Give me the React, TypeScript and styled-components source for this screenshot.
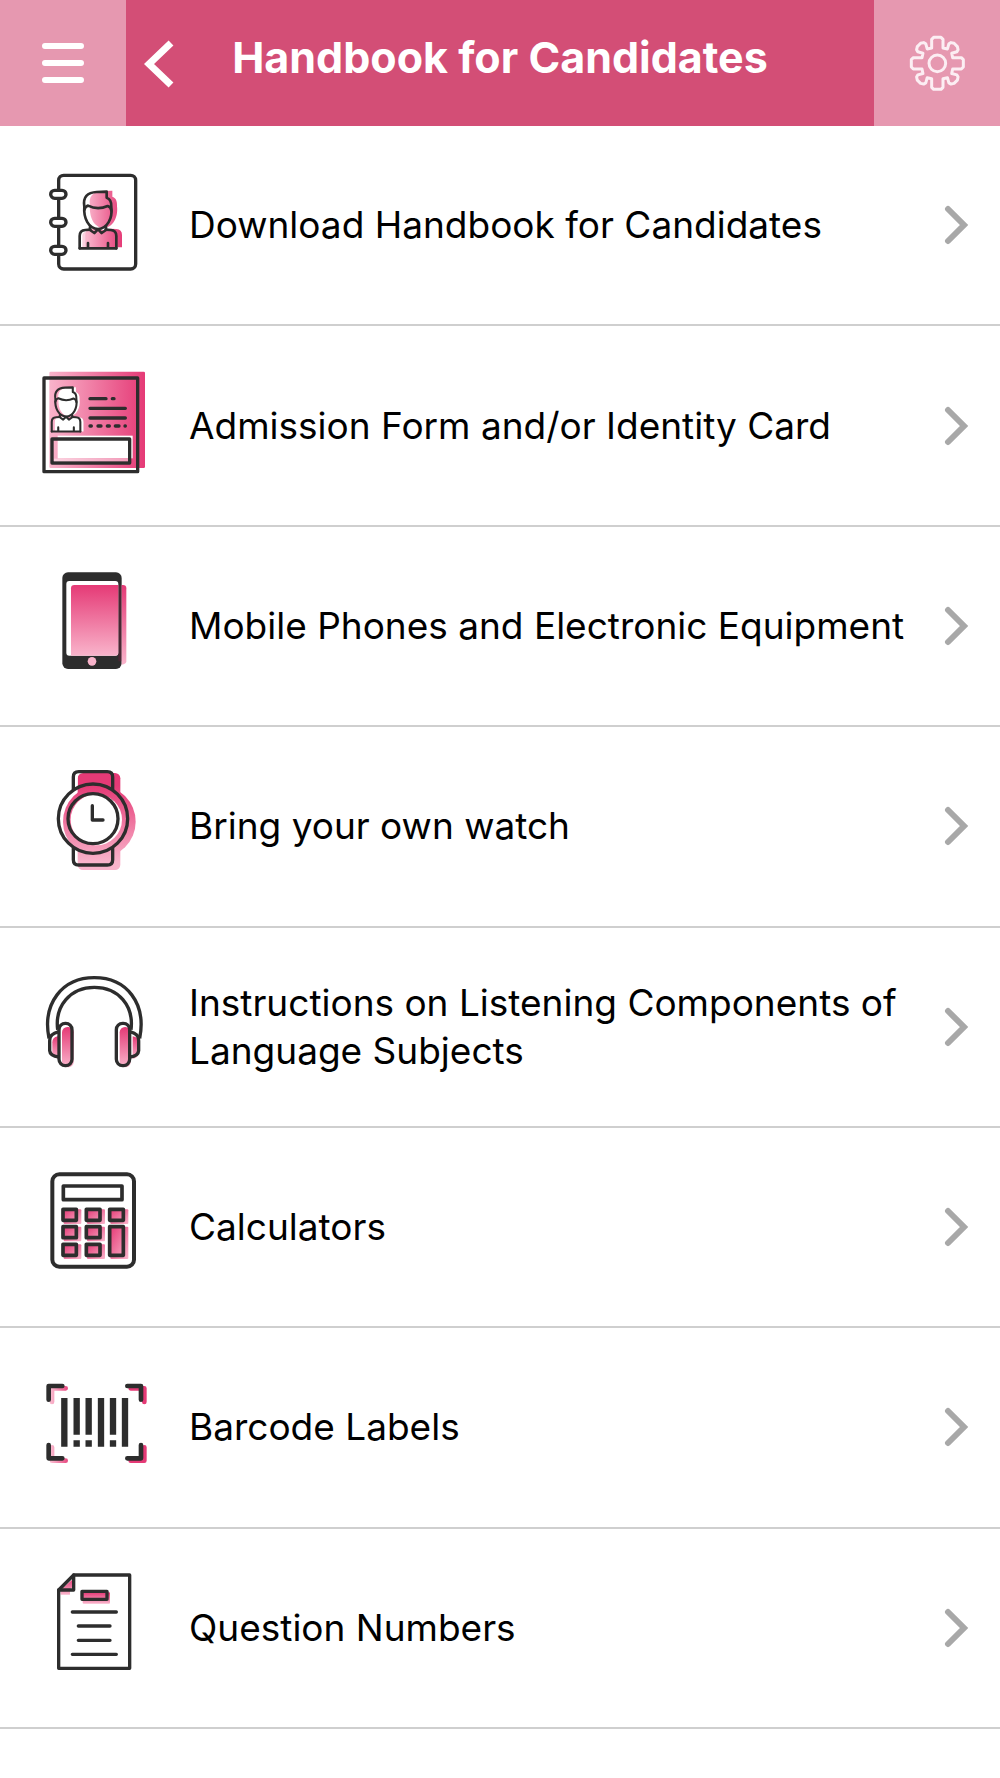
import React from "react";
import styled, { createGlobalStyle } from "styled-components";

const INK = "#2d2d2d";
const PINK = "#e53a76";
const PALE = "#f9b4cb";

const GlobalStyle = createGlobalStyle`
  * { box-sizing: border-box; }
  body {
    margin: 0;
    background: #fff;
    color: #000;
    font-family: Inter, "Liberation Sans", sans-serif;
  }
`;

const Page = styled.div`
  display: flex;
  flex-direction: column;
  min-height: 100vh;
  padding-bottom: 49px;
`;

const Header = styled.header`
  display: grid;
  grid-template-columns: 126px 1fr 126px;
  height: 126px;
  background: #d34e76;
`;

const CornerButton = styled.button`
  display: flex;
  align-items: center;
  justify-content: center;
  padding: 0;
  border: 0;
  background: #e698b0;
  cursor: pointer;
`;

const TitleBar = styled.div`
  display: grid;
  grid-template-columns: 66px 1fr 66px;
  align-items: stretch;
`;

const BackButton = styled.button`
  display: flex;
  align-items: center;
  justify-content: center;
  padding: 0;
  border: 0;
  background: transparent;
  cursor: pointer;
`;

const Title = styled.h1`
  display: flex;
  align-items: center;
  justify-content: center;
  margin: 0;
  padding-bottom: 12px;
  color: #fff;
  font-size: 43px;
  font-weight: 700;
  line-height: 48px;
  white-space: nowrap;
`;

const List = styled.ul`
  flex: 1;
  display: grid;
  grid-auto-rows: minmax(200px, 1fr);
  margin: 0;
  padding: 0;
  list-style: none;
`;

const Item = styled.li`
  display: grid;
  border-bottom: 2px solid #cfcfcf;
`;

const RowLink = styled.a`
  display: grid;
  grid-template-columns: 130px 1fr 26px;
  align-items: center;
  padding: 0 30px;
  color: inherit;
  text-decoration: none;
`;

const Label = styled.span`
  padding: 0 29px;
  font-size: 37px;
  line-height: 48px;
`;

const Icon = styled.svg`
  display: block;
  width: 130px;
  height: 130px;
`;

function Gradient({ id, vertical = false, from = PALE, to = PINK }: { id: string; vertical?: boolean; from?: string; to?: string }) {
  return (
    <linearGradient id={id} x1="0" y1="0" x2={vertical ? "0" : "1"} y2={vertical ? "1" : "0"}>
      <stop offset="0" stopColor={from} />
      <stop offset="1" stopColor={to} />
    </linearGradient>
  );
}

const HEAD = "M163 140 C158 112 172 97 200 96 L230 95 V113 C240 116 245 125 244 142 C248 175 232 206 204 207 C176 206 160 175 163 140 Z";
const TORSO = "M149 265 V228 Q149 211 166 210 L182 209 L204 214 L226 209 L242 210 Q259 211 259 228 V265 Z";

function Person() {
  return (
    <g fill="none" stroke={INK} strokeWidth="8" strokeLinejoin="round" strokeLinecap="round">
      <path d={HEAD} />
      <path d="M163 150 Q166 139 174 137 Q203 151 233 138 Q243 141 244 152" />
      <path d="M180 201 V210 L193 219 L204 208 L215 219 L228 210 V201" />
      <path d="M149 265 V228 Q149 211 166 210 L181 209 M227 209 L242 210 Q259 211 259 228 V265" />
      <path d="M149 265 H259 M174 249 V264 M234 249 V264" />
    </g>
  );
}

function HandbookIcon() {
  return (
    <Icon viewBox="0 0 390 390" aria-hidden="true">
      <defs>
        <linearGradient id="book" gradientUnits="userSpaceOnUse" x1="155" y1="0" x2="260" y2="0">
          <stop offset="0" stopColor={PALE} />
          <stop offset="1" stopColor={PINK} />
        </linearGradient>
      </defs>
      <rect x="86" y="46" width="231" height="281" rx="15" fill="#fff" stroke={INK} strokeWidth="10" />
      <g transform="translate(17 -3)" fill="url(#book)">
        <path d={HEAD} />
        <path d={TORSO} />
      </g>
      <path d="M157 256 V225 Q160 214 174 214 V263 H157 Z" fill={PALE} opacity=".6" />
      <Person />
      {[103, 187, 271].map((y) => (
        <rect key={y} x="62" y={y - 12} width="46" height="24" rx="12" fill="#fff" stroke={INK} strokeWidth="10" />
      ))}
    </Icon>
  );
}

function IdentityIcon() {
  return (
    <Icon viewBox="0 2 390 390" aria-hidden="true">
      <defs><Gradient id="card" /></defs>
      <rect x="58" y="34" width="287" height="289" rx="4" fill="url(#card)" />
      <g transform="translate(-51 7) scale(.78)">
        <g transform="translate(12 0)" fill="#fff"><path d={HEAD} /><path d={TORSO} /></g>
        <Person />
      </g>
      <rect x="83" y="226" width="225" height="68" fill="#fff" />
      <rect x="66" y="236" width="233" height="72" fill="none" stroke={INK} strokeWidth="10" strokeLinejoin="round" />
      <rect x="72" y="295" width="222" height="8" fill="#fff" opacity=".45" />
      <rect x="42" y="53" width="281" height="281" fill="none" stroke={INK} strokeWidth="10" strokeLinejoin="round" />
      <path d="M48 326 H317" stroke="#fff" strokeWidth="5" />
      <path d="M180 115 H228 M247 115 H252 M180 144 H286 M180 173 H286 M180 197 H184 M204 197 H213 M232 197 H238 M256 197 H267 M285 197 H286" stroke={INK} strokeWidth="10" strokeLinecap="round" />
    </Icon>
  );
}

function PhoneIcon() {
  return (
    <Icon viewBox="0 3 390 390" aria-hidden="true">
      <defs><Gradient id="phone" vertical from={PINK} to={PALE} /></defs>
      <rect x="97" y="37" width="178" height="290" rx="17" fill={INK} />
      <rect x="109" y="63" width="156" height="224" rx="9" fill="#fff" />
      <path d="M123 287 V85 Q123 75 133 75 H265 V278 Q265 287 256 287 Z" fill="url(#phone)" />
      <path d="M275 75 H279 Q289 75 289 85 V304 Q289 313 275 314 Z" fill="url(#phone)" />
      <path d="M265 76 H275 V304 H265 Z" fill="#7b1d3e" opacity=".35" />
      <circle cx="186" cy="304" r="13" fill={PALE} />
    </Icon>
  );
}

function WatchIcon() {
  return (
    <Icon viewBox="0 6 390 390" aria-hidden="true">
      <defs>
        <linearGradient id="watch" gradientUnits="userSpaceOnUse" x1="0" y1="80" x2="0" y2="310">
          <stop offset="0" stopColor={PINK} />
          <stop offset="1" stopColor={PALE} />
        </linearGradient>
      </defs>
      <g fill="url(#watch)">
        <rect x="143" y="42" width="128" height="291" rx="16" />
        <circle cx="208" cy="188" r="109" />
      </g>
      <path d="M135 90 V56 Q135 45 143 43 V90 Z" fill="#fff" />
      <circle cx="199" cy="182" r="77" fill="#fff" />
      <g fill="none" stroke={INK} strokeWidth="10" strokeLinecap="round" strokeLinejoin="round">
        <path d="M130 90 V54 Q130 38 146 38 H232 Q248 38 248 54 V90" />
        <path d="M130 268 V302 Q130 318 146 318 H232 Q248 318 248 302 V268" />
        <circle cx="189" cy="179" r="104" />
        <circle cx="189" cy="179" r="75" />
        <path d="M187 140 V183 H219" />
      </g>
    </Icon>
  );
}

function HeadphonesIcon() {
  return (
    <Icon viewBox="0 6 390 390" aria-hidden="true">
      <defs><Gradient id="phones" vertical from={PINK} to={PALE} /></defs>
      <g fill="url(#phones)">
        <path d="M83 229 Q67 232 67 247 V280 Q70 294 90 297 V229 Z" />
        <rect x="96" y="201" width="35" height="121" rx="16" />
        <rect x="269" y="201" width="33" height="121" rx="16" />
        <path d="M308 229 Q326 232 327 247 V280 Q324 294 308 297 Z" />
      </g>
      <g fill="none" stroke={INK} strokeWidth="10" strokeLinejoin="round">
        <path d="M57 235 C36 130 97 53 193 53 C290 53 350 130 329 235" />
        <path d="M83 209 C74 138 121 82 193 82 C266 82 312 138 303 209" />
        <rect x="87" y="190" width="39" height="127" rx="19" />
        <rect x="259" y="190" width="40" height="127" rx="19" />
        <path d="M87 215 C66 220 58 228 59 242 V272 Q60 288 87 291" />
        <path d="M300 215 C320 220 327 228 326 242 V272 Q325 288 300 291" />
      </g>
    </Icon>
  );
}

const KEYS = [
  [99, 151, 40, 33], [169, 151, 41, 33], [239, 151, 41, 33],
  [99, 203, 40, 33], [169, 203, 41, 33], [239, 203, 41, 86],
  [99, 256, 40, 33], [169, 256, 41, 33],
];

function CalculatorIcon() {
  return (
    <Icon viewBox="0 9 390 390" aria-hidden="true">
      <defs>
        <linearGradient id="key" x1="0" y1="0" x2="1" y2="1">
          <stop offset="0" stopColor={PINK} />
          <stop offset="1" stopColor={PALE} />
        </linearGradient>
      </defs>
      <rect x="67" y="46" width="245" height="277" rx="21" fill="#fff" stroke={INK} strokeWidth="12" />
      <rect x="100" y="81" width="176" height="41" fill="none" stroke={INK} strokeWidth="11" strokeLinejoin="round" />
      {KEYS.map(([x, y, w, h]) => (
        <g key={`${x}-${y}`}>
          <rect x={x + 2} y={y} width={w + 13} height={h + 11} rx="3" fill="url(#key)" />
          <rect x={x} y={y} width={w} height={h} fill="none" stroke={INK} strokeWidth="11" strokeLinejoin="round" />
        </g>
      ))}
    </Icon>
  );
}

const CORNERS = "M56 122 V81 H97 M292 81 H333 V122 M56 258 V298 H97 M292 298 H333 V258";

function BarcodeIcon() {
  return (
    <Icon viewBox="0 9 390 390" aria-hidden="true">
      <defs>
        <linearGradient id="scan" gradientUnits="userSpaceOnUse" x1="55" y1="0" x2="110" y2="0">
          <stop offset="0" stopColor={PALE} />
          <stop offset="1" stopColor={PINK} />
        </linearGradient>
      </defs>
      <g fill="none" strokeWidth="14" strokeLinecap="round" strokeLinejoin="round">
        <path d={CORNERS} stroke="url(#scan)" transform="translate(10 7)" />
        <path d={CORNERS} stroke={INK} />
      </g>
      <path d="M103 117 V263 M213 117 V263 M285 117 V263 M140 117 V227 M140 244 V263 M176 117 V227 M176 244 V263 M249 117 V227 M249 244 V263" stroke={INK} strokeWidth="19" />
    </Icon>
  );
}

function PaperIcon() {
  return (
    <Icon viewBox="0 12 390 390" aria-hidden="true">
      <defs><Gradient id="paper" vertical from={PINK} to={PALE} /></defs>
      <path d="M92 107 L120 107 V90 L132 82 V58 L92 92 Z" fill="url(#paper)" />
      <rect x="158" y="100" width="82" height="34" rx="3" fill="url(#paper)" />
      <g fill="none" stroke={INK} strokeWidth="10" strokeLinejoin="round" strokeLinecap="round">
        <path d="M131 48 H299 V328 H86 V93 Z" />
        <path d="M131 48 V93 H86" />
        <rect x="156" y="97" width="75" height="24" />
        <path d="M127 159 H259 M145 201 H240 M145 244 H240 M127 286 H259" />
      </g>
    </Icon>
  );
}

const STRAIGHT_TOOTH = [[-17, -46], [-17, -72], [-11, -78], [11, -78], [17, -72], [17, -46]];
const FLARED_TOOTH = [[-9, -52], [-17, -66], [-15, -73], [-7, -78], [7, -78], [15, -73], [17, -66], [9, -52]];

const gearPath = (() => {
  const points: string[] = [];
  for (let tooth = 0; tooth < 8; tooth++) {
    const a = (tooth * Math.PI) / 4;
    (tooth % 2 ? FLARED_TOOTH : STRAIGHT_TOOTH).forEach(([x, y]) => {
      points.push(`${(x * Math.cos(a) - y * Math.sin(a)).toFixed(1)} ${(x * Math.sin(a) + y * Math.cos(a)).toFixed(1)}`);
    });
  }
  return `M${points.join("L")}Z`;
})();

const ROWS = [
  { label: "Download Handbook for Candidates", Art: HandbookIcon },
  { label: "Admission Form and/or Identity Card", Art: IdentityIcon },
  { label: "Mobile Phones and Electronic Equipment", Art: PhoneIcon },
  { label: "Bring your own watch", Art: WatchIcon },
  { label: "Instructions on Listening Components of Language Subjects", Art: HeadphonesIcon },
  { label: "Calculators", Art: CalculatorIcon },
  { label: "Barcode Labels", Art: BarcodeIcon },
  { label: "Question Numbers", Art: PaperIcon },
];

export default function App() {
  return (
    <Page>
      <GlobalStyle />
      <Header>
        <CornerButton type="button" aria-label="Menu">
          <svg width="44" height="44" viewBox="0 0 44 44" aria-hidden="true">
            <path d="M4 5 H40 M4 22 H40 M4 39 H40" stroke="#fff" strokeWidth="6" strokeLinecap="round" />
          </svg>
        </CornerButton>
        <TitleBar>
          <BackButton type="button" aria-label="Back">
            <svg width="30" height="50" viewBox="0 0 30 50" aria-hidden="true">
              <path d="M27 5 L5 26 L27 47" fill="none" stroke="#fff" strokeWidth="7" />
            </svg>
          </BackButton>
          <Title>Handbook for Candidates</Title>
        </TitleBar>
        <CornerButton type="button" aria-label="Settings">
          <svg width="58" height="58" viewBox="-88 -88 174 174" fill="none" stroke="#fceef3" strokeWidth="9" strokeLinejoin="round" aria-hidden="true">
            <path d={gearPath} />
            <circle r="25" />
          </svg>
        </CornerButton>
      </Header>
      <List>
        {ROWS.map(({ label, Art }) => (
          <Item key={label}>
            <RowLink href="#">
              <Art />
              <Label>{label}</Label>
              <svg width="26" height="40" viewBox="0 0 26 40" aria-hidden="true">
                <path d="M4 4 L20 20 L4 36" fill="none" stroke="#a8a8a8" strokeWidth="6" strokeLinecap="round" />
              </svg>
            </RowLink>
          </Item>
        ))}
      </List>
    </Page>
  );
}
